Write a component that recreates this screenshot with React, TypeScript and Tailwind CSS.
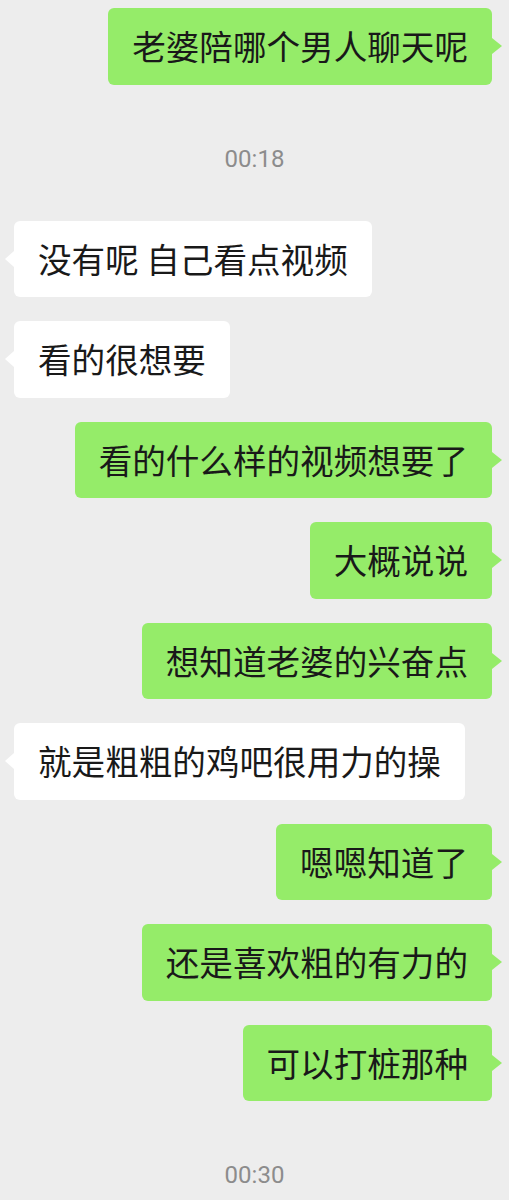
type Msg =
  | { kind: "time"; text: string }
  | { kind: "me" | "them"; text: string };

const messages: Msg[] = [
  { kind: "me", text: "老婆陪哪个男人聊天呢" },
  { kind: "time", text: "00:18" },
  { kind: "them", text: "没有呢 自己看点视频" },
  { kind: "them", text: "看的很想要" },
  { kind: "me", text: "看的什么样的视频想要了" },
  { kind: "me", text: "大概说说" },
  { kind: "me", text: "想知道老婆的兴奋点" },
  { kind: "them", text: "就是粗粗的鸡吧很用力的操" },
  { kind: "me", text: "嗯嗯知道了" },
  { kind: "me", text: "还是喜欢粗的有力的" },
  { kind: "me", text: "可以打桩那种" },
  { kind: "time", text: "00:30" },
];

function Bubble({ mine, text }: { mine: boolean; text: string }) {
  return (
    <div className={mine ? "flex justify-end pr-[17px]" : "flex justify-start pl-[14px]"}>
      <div
        className={
          "relative rounded-[6px] px-[24px] py-[20px] text-[33.6px] leading-[36.5px] text-[#191919] whitespace-pre " +
          (mine ? "bg-[#95ec69]" : "bg-white")
        }
      >
        {text}
        {mine ? (
          <span className="absolute top-1/2 -translate-y-1/2 -right-[10px] w-0 h-0 border-y-[8px] border-y-transparent border-l-[10px] border-l-[#95ec69]" />
        ) : (
          <span className="absolute top-1/2 -translate-y-1/2 -left-[9px] w-0 h-0 border-y-[8px] border-y-transparent border-r-[9px] border-r-white" />
        )}
      </div>
    </div>
  );
}

export default function App() {
  return (
    <div
      className="w-[509px] h-[1200px] overflow-hidden bg-[#ededed] pt-[8px] flex flex-col gap-[24px]"
      style={{ fontFamily: '"Noto Sans CJK SC", "Noto Sans", sans-serif' }}
    >
      {messages.map((m, i) =>
        m.kind === "time" ? (
          <div
            key={i}
            className="mt-[36px] mb-[24px] text-center text-[24px] leading-[28px] text-[#8c8c8c]"
            style={{ fontFamily: 'Roboto, "Noto Sans", sans-serif' }}
          >
            {m.text}
          </div>
        ) : (
          <Bubble key={i} mine={m.kind === "me"} text={m.text} />
        )
      )}
    </div>
  );
}
